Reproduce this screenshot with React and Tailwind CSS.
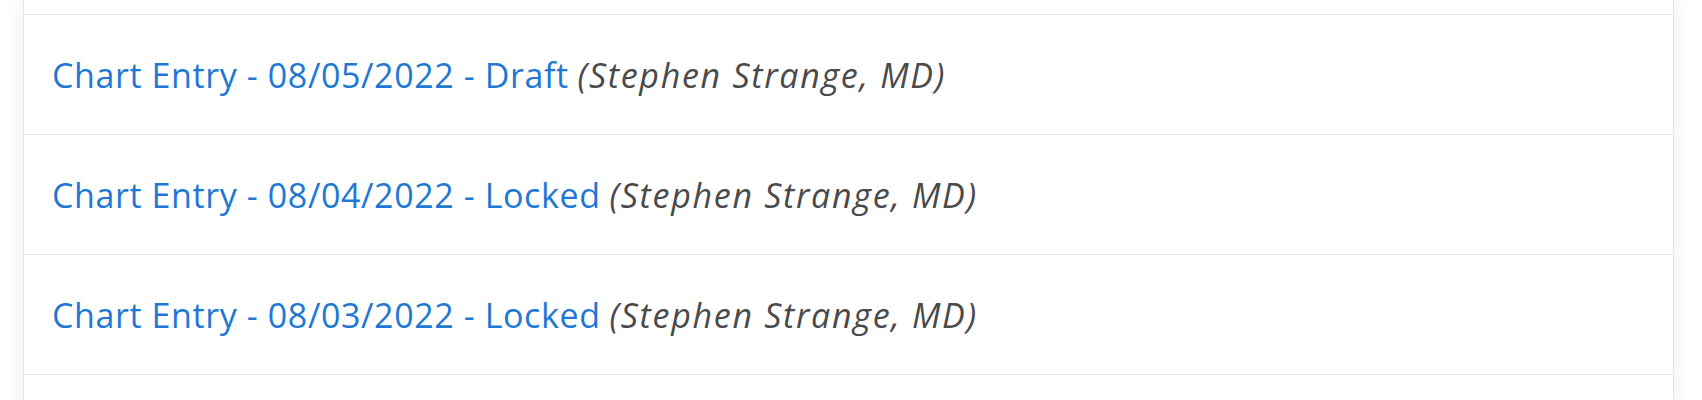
const entries = [
  { date: '08/05/2022', status: 'Draft', author: 'Stephen Strange, MD' },
  { date: '08/04/2022', status: 'Locked', author: 'Stephen Strange, MD' },
  { date: '08/03/2022', status: 'Locked', author: 'Stephen Strange, MD' },
];

const ChartRow = ({ entry }) => (
  <div className="flex h-[120px] items-center border-t border-[#e6e6e6] pl-[28px]">
    <p className="text-[34px] leading-none whitespace-nowrap">
      <a href="#" className="text-[#1f78d3] tracking-[0.6px]">
        Chart Entry - {entry.date} - {entry.status}
      </a>{' '}
      <em className="text-[#4a4a4a] tracking-[1.7px]">({entry.author})</em>
    </p>
  </div>
);

export default function App() {
  return (
    <div className="h-[400px] w-full overflow-hidden bg-white font-['Open_Sans',sans-serif]">
      <div className="ml-[23px] mr-[28px] border-x border-[#e6e6e6] bg-white shadow-[0_0_22px_rgba(0,0,0,0.07)]">
        {/* bottom of the previous row */}
        <div className="h-[14px]" />
        {entries.map((entry) => (
          <ChartRow key={entry.date} entry={entry} />
        ))}
        <div className="h-[40px] border-t border-[#e6e6e6]" />
      </div>
    </div>
  );
}
